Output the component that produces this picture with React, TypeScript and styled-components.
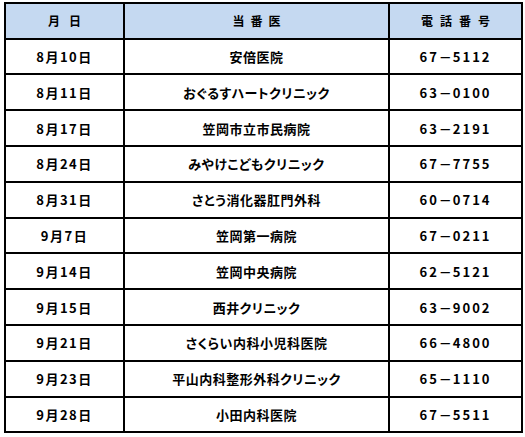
import React from "react";
import styled, { createGlobalStyle } from "styled-components";

const Global = createGlobalStyle`
  html, body { margin: 0; padding: 0; background: #ffffff; }
  body { font-family: "Noto Sans CJK JP", "Noto Sans", sans-serif; color: #000; }
`;

const Page = styled.div`
  padding: 2px 4px 0 4px;
`;

const Table = styled.table`
  border-collapse: collapse;
  width: 517px;
  table-layout: fixed;
  border: 2px solid #000;
`;

const Col = styled.col<{ $w: number }>`
  width: ${(p) => p.$w}px;
`;

const HeadCell = styled.th`
  height: 33.6px;
  padding: 0;
  background: #c5d9f1;
  border: 2px solid #000;
  font-size: 12px;
  font-weight: 700;
  text-align: center;
  vertical-align: middle;
  line-height: 1;
`;

const HeadText = styled.span<{ $gap: number }>`
  letter-spacing: ${(p) => p.$gap}px;
  margin-right: -${(p) => p.$gap}px;
`;

const Row = styled.tr``;

const Cell = styled.td<{ $spacing: number }>`
  height: 33.8px;
  padding: 0;
  border: 2px solid #000;
  font-size: 13px;
  font-weight: 700;
  text-align: center;
  vertical-align: middle;
  line-height: 1;
  letter-spacing: ${(p) => p.$spacing}px;
  font-feature-settings: "palt";
`;

const Dash = styled.span`
  font-feature-settings: normal;
  letter-spacing: 0;
  margin-right: 1px;
`;

const rows: [string, string, string, string][] = [
  ["8月10日", "安倍医院", "67", "5112"],
  ["8月11日", "おぐるすハートクリニック", "63", "0100"],
  ["8月17日", "笠岡市立市民病院", "63", "2191"],
  ["8月24日", "みやけこどもクリニック", "67", "7755"],
  ["8月31日", "さとう消化器肛門外科", "60", "0714"],
  ["9月7日", "笠岡第一病院", "67", "0211"],
  ["9月14日", "笠岡中央病院", "62", "5121"],
  ["9月15日", "西井クリニック", "63", "9002"],
  ["9月21日", "さくらい内科小児科医院", "66", "4800"],
  ["9月23日", "平山内科整形外科クリニック", "65", "1110"],
  ["9月28日", "小田内科医院", "67", "5511"],
];

export default function App() {
  return (
    <Page>
      <Global />
      <Table>
        <colgroup>
          <Col $w={119} />
          <Col $w={265} />
          <Col $w={133} />
        </colgroup>
        <thead>
          <tr>
            <HeadCell>
              <HeadText $gap={9}>月日</HeadText>
            </HeadCell>
            <HeadCell>
              <HeadText $gap={6}>当番医</HeadText>
            </HeadCell>
            <HeadCell>
              <HeadText $gap={7}>電話番号</HeadText>
            </HeadCell>
          </tr>
        </thead>
        <tbody>
          {rows.map(([d, n, a, b]) => (
            <Row key={d}>
              <Cell $spacing={1.5}>{d}</Cell>
              <Cell $spacing={0.5}>{n}</Cell>
              <Cell $spacing={2}>
                {a}
                <Dash>－</Dash>
                {b}
              </Cell>
            </Row>
          ))}
        </tbody>
      </Table>
    </Page>
  );
}
